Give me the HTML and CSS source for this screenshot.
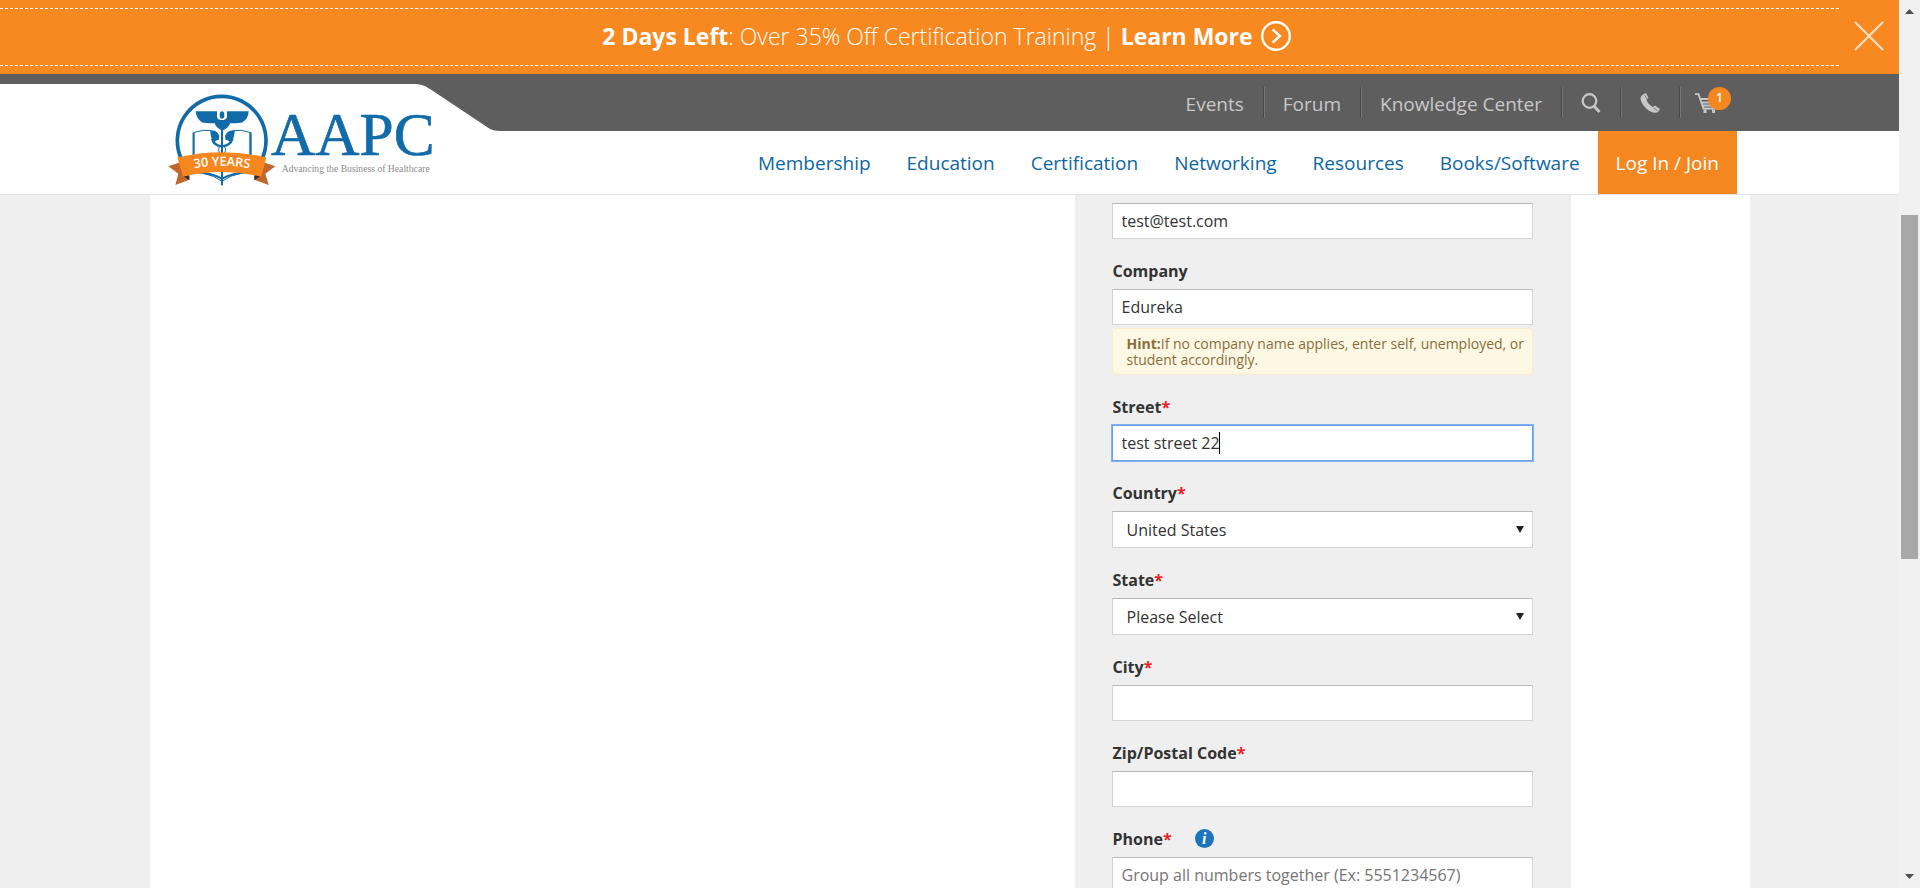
FILE: index.html
```html
<!DOCTYPE html>
<html lang="en">
<head>
<meta charset="utf-8">
<title>AAPC</title>
<link rel="stylesheet" href="styles.css">
</head>
<body>
<div class="viewport">
  <div class="page">
    <div class="banner">
      <p class="banner-text">
        <span><strong>2 Days Left</strong>: Over 35% Off Certification Training | <a href="#learn">Learn More</a></span>
        <svg class="banner-arrow" viewBox="0 0 30 30" aria-hidden="true"><circle cx="15" cy="15" r="13.8"/><path d="M11.5 8.5 19 15l-7.500 6.500"/></svg>
      </p>
      <button class="banner-close" type="button" aria-label="Close">
        <svg viewBox="0 0 30 30"><path d="M1 1 29 29M29 1 1 29"/></svg>
      </button>
    </div>

    <header class="header">
      <div class="topbar">
        <div class="container topbar-inner">
          <a class="brand" href="#home" aria-label="AAPC home">
            <svg class="brand-tab" viewBox="0 0 338 47" aria-hidden="true"><path d="M0 0H251C258 0 262 1 268 5L328 45Q332 47 338 47H0Z"/></svg>
            <svg class="brand-logo" viewBox="66 60 840 300" role="img" aria-label="AAPC logo">
              <path d="M123 265A133 133 0 1 1 367 265" fill="none" stroke="#126ba9" stroke-width="11"/>
              <g fill="#126ba9">
                <path d="M167 124H231V142Q233 150 241 150H251Q259 150 261 142V124H326Q325 145 308 157Q300 160 270 160Q268 173 247 182Q227 173 224 160Q194 160 185 157Q169 145 167 124Z"/>
                <ellipse cx="246" cy="135" rx="7" ry="11"/>
                <path d="M211 182Q232 178 238 198L236 210Q228 208 222 218Q211 204 211 182ZM284 182Q262 178 255 198L257 210Q265 208 272 218Q284 204 284 182Z"/>
                <rect x="243" y="178" width="6" height="168"/>
              </g>
              <g fill="none" stroke="#126ba9">
                <path stroke-width="7" d="M216 206Q222 228 246 229Q270 228 278 206"/>
                <path stroke-width="3" d="M239 230Q230 242 245 254M253 230Q263 242 248 254"/>
                <path stroke-width="3" d="M160 260V188Q190 177 215 182M333 260V188Q303 177 278 182"/>
                <path stroke-width="6" d="M161 188V262M331 188V262"/>
                <path stroke-width="6" d="M160 306Q215 308 246 326Q277 308 332 306"/>
                <path stroke-width="3" d="M190 310Q222 316 246 334Q270 316 302 310"/>
              </g>
              <path fill="#c0682c" d="M85 289 125 275 148 318 148 329 106 345 115 311ZM406 289 366 275 343 318 343 329 386 345 376 311Z"/>
              <path fill="#3d2b24" d="M130 319 148 316V331ZM361 319 343 316V331Z"/>
              <path fill="#f6871f" d="M112 262Q246 231 379 262L364 320Q246 292 129 320Z"/>
              <path id="ribbon-line" fill="none" d="M146 298Q246 277 346 298"/>
              <text class="ribbon-text"><textPath href="#ribbon-line" startOffset="50%">30 YEARS</textPath></text>
              <text class="brand-name" x="393" y="256">AAPC</text>
              <text class="brand-tagline" x="425" y="306">Advancing the Business of Healthcare</text>
            </svg>
          </a>
          <nav class="top-links" aria-label="Utility">
            <a href="#events">Events</a>
            <a href="#forum">Forum</a>
            <a href="#knowledge">Knowledge Center</a>
            <a class="icon-link" href="#search" aria-label="Search">
              <svg viewBox="0 0 20 20"><circle cx="8.500" cy="8" r="6.800" fill="none" stroke="#c8c8c8" stroke-width="2.200"/><path d="M13 13 18.500 19" stroke="#c8c8c8" stroke-width="2.800"/></svg>
            </a>
            <a class="icon-link" href="#phone" aria-label="Phone">
              <svg viewBox="0 0 20 20" fill="#c8c8c8"><path d="M3.500 1.200 6 0 8.500 5 6.500 6.500Q7 9 9 11T12.800 14L15 12.500 20 16 18.500 18.500Q17 20.500 13 19.500 8 18 4 13 .500 8.500.500 5 .800 2.500 3.500 1.200Z"/><path d="m4.800 2.200 3 5M13.500 14.800l4 3" fill="none" stroke="#5e5e5e" stroke-width=".8"/></svg>
            </a>
            <a class="icon-link cart" href="#cart" aria-label="Cart, 1 item">
              <svg viewBox="0 0 22 20" fill="none" stroke="#c8c8c8" stroke-width="1.800"><path d="M0 1.200H3.500L8.500 15.500H21M5.500 6H20M7 9.500H20M8 12.500H20"/><g fill="#c8c8c8" stroke="none"><rect x="8.500" y="16.500" width="3" height="3.500"/><rect x="17" y="16.500" width="3" height="3.500"/></g></svg>
              <span class="badge">1</span>
            </a>
          </nav>
        </div>
      </div>
      <nav class="container main-nav" aria-label="Main">
        <a href="#membership">Membership</a>
        <a href="#education">Education</a>
        <a href="#certification">Certification</a>
        <a href="#networking">Networking</a>
        <a href="#resources">Resources</a>
        <a href="#books">Books/Software</a>
        <a class="login" href="#login">Log In / Join</a>
      </nav>
    </header>

    <main class="main">
      <div class="content">
        <form class="panel">
          <input class="control" type="email" aria-label="Email" value="test@test.com">
          <div class="field">
            <label for="company">Company</label>
            <input class="control" id="company" type="text" value="Edureka">
            <p class="hint"><strong>Hint:</strong>If no company name applies, enter self, unemployed, or student accordingly.</p>
          </div>
          <div class="field">
            <label for="street">Street<span class="required">*</span></label>
            <div class="control-wrap">
              <input class="control is-focused" id="street" type="text" value="test street 22">
              <span class="caret"></span>
            </div>
          </div>
          <div class="field">
            <label for="country">Country<span class="required">*</span></label>
            <div class="control-wrap select-wrap">
              <select class="control" id="country"><option>United States</option></select>
            </div>
          </div>
          <div class="field">
            <label for="state">State<span class="required">*</span></label>
            <div class="control-wrap select-wrap">
              <select class="control" id="state"><option>Please Select</option></select>
            </div>
          </div>
          <div class="field">
            <label for="city">City<span class="required">*</span></label>
            <input class="control" id="city" type="text">
          </div>
          <div class="field">
            <label for="zip">Zip/Postal Code<span class="required">*</span></label>
            <input class="control" id="zip" type="text">
          </div>
          <div class="field">
            <div class="label-row">
              <label for="phone">Phone<span class="required">*</span></label>
              <span class="info">i</span>
            </div>
            <input class="control" id="phone" type="tel" placeholder="Group all numbers together (Ex: 5551234567)">
          </div>
        </form>
      </div>
    </main>
  </div>

  <div class="scrollbar" aria-hidden="true">
    <svg class="scroll-arrow" viewBox="0 0 9 5"><path d="M4.500 0 9 5H0Z"/></svg>
    <div class="track"><div class="thumb"></div></div>
    <svg class="scroll-arrow" viewBox="0 0 9 5"><path d="M0 0H9L4.500 5Z"/></svg>
  </div>
</div>
</body>
</html>
```
FILE: styles.css
```css
* { box-sizing: border-box; }

body {
  margin: 0;
  background: #efefef;
  color: #333;
  font-family: "Open Sans", "Noto Sans", sans-serif;
  font-size: 16px;
}

a { text-decoration: none; }
p { margin: 0; }

.viewport {
  display: grid;
  grid-template-columns: minmax(0, 1fr) 21px;
  height: 100vh;
  overflow: hidden;
}

.page {
  display: flex;
  flex-direction: column;
  min-height: 0;
}

.container {
  width: 100%;
  max-width: 1575px;
  margin: 0 auto;
}

/* Promo banner */
.banner {
  display: flex;
  padding: 8px 0;
  background: #f88920;
  color: #fff;
}

.banner-text {
  flex: 1;
  display: flex;
  align-items: center;
  justify-content: center;
  gap: 8px;
  padding: 12px 0 14px 54px;
  border-top: 1px dashed #fff;
  border-bottom: 1px dashed #fff;
  font-size: 23px;
  font-weight: 300;
  line-height: 30px;
}

.banner-text strong,
.banner-text a { color: #fff; font-weight: 700; }

.banner-arrow {
  width: 30px;
  height: 30px;
  fill: none;
  stroke: #fff;
  stroke-width: 2.4;
}

.banner-close {
  width: 60px;
  padding: 0 15px 2px;
  border: 0;
  background: none;
}

.banner-close svg {
  display: block;
  width: 30px;
  height: 30px;
  stroke: #fde3c8;
  stroke-width: 2;
}

/* Header */
.header {
  background: #fff;
  border-bottom: 1px solid #e4e4e4;
}

.topbar { background: #5e5e5e; }

.topbar-inner {
  position: relative;
  display: flex;
  justify-content: flex-end;
  height: 57px;
}

.brand {
  position: absolute;
  left: 0;
  top: 10px;
}

.brand::before {
  content: "";
  position: absolute;
  top: 0;
  right: 100%;
  width: 50vw;
  height: 47px;
  background: #fff;
}

.brand-tab {
  display: block;
  width: 338px;
  height: 47px;
  fill: #fff;
}

.brand-logo {
  position: absolute;
  left: 0;
  top: 6px;
  width: 280px;
  height: 100px;
}

.brand-name {
  font: 184px "Liberation Serif", serif;
  fill: #126ba9;
  stroke: #126ba9;
  stroke-width: 2;
}

.brand-tagline {
  font: 29px "Liberation Serif", serif;
  fill: #8c8c8c;
}

.ribbon-text {
  font: 600 38px "Open Sans", sans-serif;
  fill: #fff;
  text-anchor: middle;
}

.top-links {
  display: flex;
  align-items: center;
}

.top-links a {
  display: flex;
  align-items: center;
  height: 31px;
  padding: 2px 19px 0;
  border-left: 1px solid #494949;
  box-shadow: inset 1px 0 #777;
  color: #c8c8c8;
  font-size: 19px;
}

.top-links a:first-child { border-left: 0; box-shadow: none; }

.top-links .icon-link { width: 59px; padding: 0 19px; }

.icon-link svg {
  flex: none;
  width: 20px;
  height: 20px;
}

.top-links .cart {
  position: relative;
  width: 58px;
  padding: 0 15px;
}

.cart svg { width: 22px; }

.badge {
  position: absolute;
  top: 0;
  right: 6px;
  width: 23px;
  height: 23px;
  border-radius: 50%;
  background: #f58720;
  color: #fff;
  font-size: 12px;
  font-weight: 600;
  line-height: 22px;
  text-align: center;
}

.main-nav {
  display: flex;
  justify-content: flex-end;
}

.main-nav a {
  padding: 2px 18px 0;
  color: #0e66a0;
  font-size: 19px;
  line-height: 61px;
}

.main-nav .login {
  background: #f58720;
  color: #fff;
}

/* Registration form */
.main {
  flex: 1;
  min-height: 0;
  overflow: hidden;
}

.content {
  display: grid;
  grid-template-columns: 925fr 496fr 179fr;
  max-width: 1600px;
  min-height: 100%;
  margin: 0 auto;
  background: #fff;
}

.panel {
  grid-column: 2;
  padding: 8px 38px 24px 37px;
  background: #efefef;
}

.field { margin-top: 22px; }

.field label {
  display: block;
  margin-bottom: 8px;
  padding-left: 1px;
  font-weight: 700;
  line-height: 20px;
}

.label-row {
  display: flex;
  gap: 23px;
}

.required { color: #ed1c24; }

.control {
  display: block;
  width: 100%;
  height: 36px;
  padding: 0 9px;
  border: 1px solid #d3d3d3;
  border-top-color: #bababa;
  border-radius: 0;
  background: #fff;
  color: #333;
  font: inherit;
}

.control::placeholder { color: #757575; }

.control-wrap { position: relative; }

.is-focused {
  border-color: #6b9ff0;
  outline: 1px solid #7fb0fa;
}

.caret {
  position: absolute;
  left: 107px;
  top: 7px;
  width: 1px;
  height: 22px;
  background: #000;
}

select.control {
  appearance: none;
  height: 37px;
  padding: 0 14px;
}

.select-wrap::after {
  content: "";
  position: absolute;
  right: 9px;
  top: 15px;
  border: solid transparent;
  border-width: 7px 4px 0;
  border-top-color: #222;
}

.hint {
  margin-top: 3px;
  padding: 7px 0 6px 14px;
  border: 1px solid #faebcc;
  border-radius: 4px;
  background: #fcf8e3;
  color: #8a6d3b;
  font-size: 14px;
  line-height: 16px;
}

.info {
  width: 19px;
  height: 19px;
  border-radius: 50%;
  background: #1c75bc;
  color: #fff;
  font: italic 700 16px/19px "Liberation Serif", serif;
  text-align: center;
}

/* Scrollbar */
.scrollbar {
  display: flex;
  flex-direction: column;
  align-items: center;
  padding: 9px 2px;
  background: #f1f1f1;
}

.scroll-arrow {
  width: 9px;
  height: 5px;
  fill: #505050;
}

.track {
  flex: 1;
  width: 17px;
  display: grid;
  grid-template-rows: 201fr 344fr 315fr;
}

.thumb {
  grid-row: 2;
  background: #a8a8a8;
}
```
